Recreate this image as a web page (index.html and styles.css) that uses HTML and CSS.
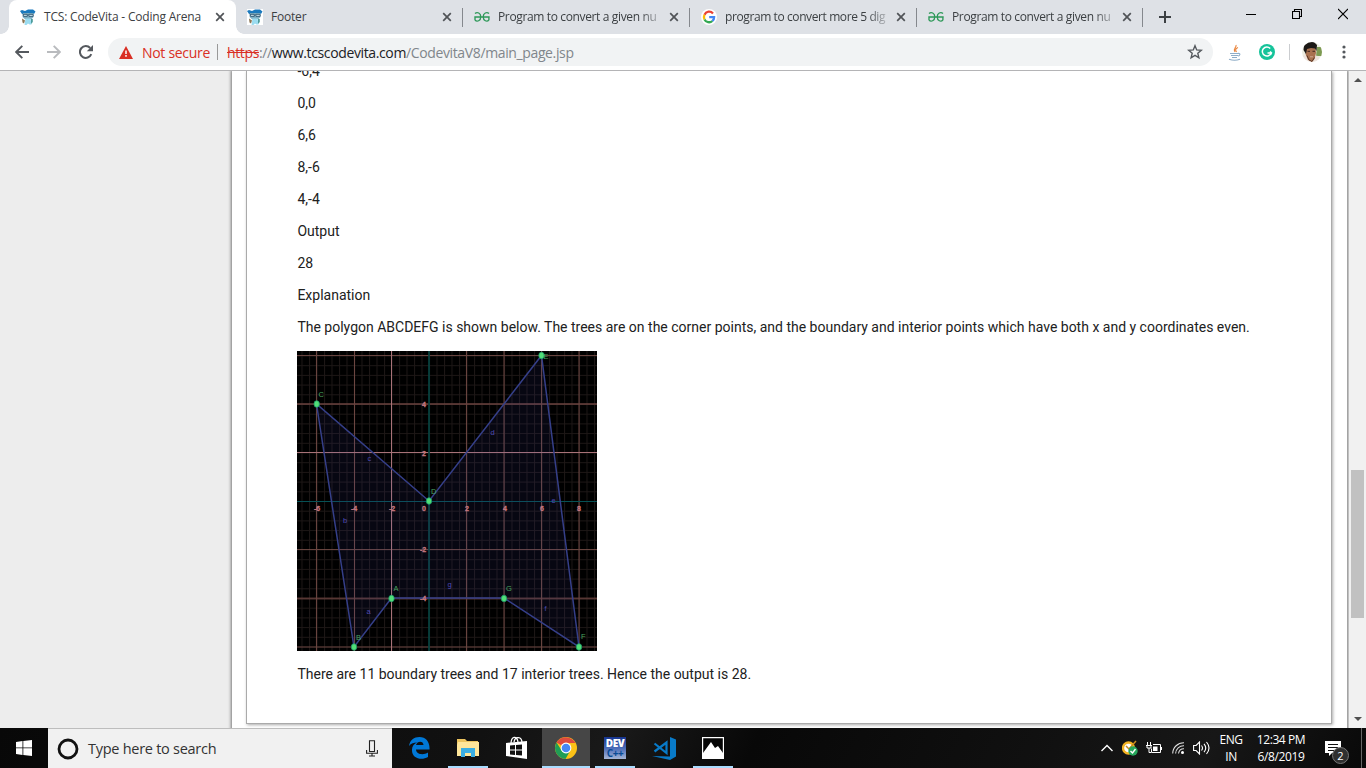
FILE: index.html
```html
<!DOCTYPE html>
<html lang="en">
<head>
<meta charset="utf-8">
<title>TCS: CodeVita - Coding Arena</title>
<link rel="stylesheet" href="styles.css">
</head>
<body>
<svg class="defs" width="0" height="0">
  <symbol id="close" viewBox="0 0 10 10"><path d="M1.2 1.2 8.8 8.8M8.8 1.2 1.2 8.8" stroke="#505357" stroke-width="1.7"/></symbol>
  <symbol id="mascot" viewBox="0 0 16 16">
    <path d="M0 2 2 1l3 1 3-1.400L13 .5 15.500 2.500 14 5 12 4 2 5Z" fill="#1a79bd"/>
    <path d="M3 4h10l.5 4-2 2.300H5L2.500 8Z" fill="#7fb0c4"/>
    <path d="M3 5.300h4.300v2H3.500ZM8.700 5.300h4.500v2H9Z" fill="#d9eff7" stroke="#27506a" stroke-width=".9"/>
    <path d="M5.500 9.500h5l1 6h-2L8 14.500l-1.500 1.500H4.500Z" fill="#9bdcf0"/>
    <path d="m2 9.500 3 2-1 3-1.500-1Z" fill="#8a7453"/><path d="M11 10h1.800v3l-1.800 2" fill="#4c9b9b"/>
  </symbol>
  <symbol id="geeks" viewBox="0 0 16 12">
    <path d="M1 2.5C3.2.6 6.8 2 6.8 5.8S3 11.5.9 8.8M.3 6h15.4M15 2.5C12.8.6 9.2 2 9.2 5.8S13 11.5 14.9 8.8V6M1 6v3" fill="none" stroke="#2d9858" stroke-width="1.35"/>
  </symbol>
</svg>

<header class="tabstrip">
  <div class="tab active"><svg class="fav"><use href="#mascot"/></svg><span class="title t1">TCS: CodeVita - Coding Arena</span><svg class="x"><use href="#close"/></svg></div>
  <div class="tab"><span class="fav square"><svg class="fav"><use href="#mascot"/></svg></span><span class="title t2">Footer</span><svg class="x"><use href="#close"/></svg></div>
  <div class="tab"><svg class="fav"><use href="#geeks"/></svg><span class="title fade t3">Program to convert a given nu</span><svg class="x"><use href="#close"/></svg></div>
  <div class="tab"><svg class="fav" viewBox="0 0 16 16"><circle cx="8" cy="8" r="8" fill="#fff"/><g fill="none" stroke-width="2.3"><path d="M12 4.4A5.1 5.1 0 0 0 3.5 5.7" stroke="#ea4335"/><path d="M3.5 5.7a5.1 5.1 0 0 0 0 4.7" stroke="#fbbc05"/><path d="M3.5 10.4A5.1 5.1 0 0 0 11.4 12" stroke="#34a853"/><path d="M11.4 12A5 5 0 0 0 13.1 8.2H8.2" stroke="#4285f4"/></g></svg><span class="title fade t4">program to convert more 5 dig</span><svg class="x"><use href="#close"/></svg></div>
  <div class="tab last"><svg class="fav"><use href="#geeks"/></svg><span class="title fade t3">Program to convert a given nu</span><svg class="x"><use href="#close"/></svg></div>
  <svg class="plus" viewBox="0 0 12 12"><path d="M6 0v12M0 6h12" stroke="#3c4043" stroke-width="2"/></svg>
  <div class="winctl">
    <svg width="10" height="12"><path d="M0 6.5h10" stroke="#000"/></svg>
    <svg width="10" height="12"><path d="M.5 3.5h7v7h-7zM2.500 3.500v-2h7v7h-2" fill="none" stroke="#000" stroke-width="1.1"/></svg>
    <svg width="10" height="12"><path d="m0 1 10 10M10 1 0 11" stroke="#000" stroke-width="1.1"/></svg>
  </div>
</header>

<nav class="toolbar">
  <svg class="nav" viewBox="0 0 14 14"><path d="M14 7H1.500M7.300.8 1.200 7l6.100 6.200" fill="none" stroke="#55595e" stroke-width="1.900"/></svg>
  <svg class="nav" viewBox="0 0 14 14"><path d="M0 7h12.500M6.700.8 12.800 7l-6.100 6.200" fill="none" stroke="#b9bbbe" stroke-width="1.900"/></svg>
  <svg class="nav" viewBox="0 0 14 14"><path d="M12.300 9.200A5.900 5.900 0 1 1 11.200 3" fill="none" stroke="#55595e" stroke-width="2"/><path d="M14 0v6.200H7.800Z" fill="#55595e"/></svg>
  <div class="omnibox">
    <svg width="14" height="13" viewBox="0 0 14 13"><path d="M7 0 14 13H0Z" fill="#d93025"/><path d="M7 4.500V8M7 9v1.700" stroke="#fff" stroke-width="1.500"/></svg>
    <span class="insecure">Not secure</span><i class="bar"></i>
    <span class="url"><s>https</s>://<b>www.tcscodevita.com</b>/CodevitaV8/main_page.jsp</span>
    <svg class="star" width="16" height="16" viewBox="0 0 16 16"><path d="m8 1.700 1.700 4.200 4.600.4-3.500 3 1.100 4.500L8 11.400l-3.900 2.400 1.100-4.500-3.500-3 4.600-.4Z" fill="none" stroke="#54585d" stroke-width="1.400"/></svg>
  </div>
  <svg class="java" width="14" height="17" viewBox="0 0 14 17"><path d="M8 1C9 3.500 4.500 4.500 7 8M10 3.500C7.500 4.500 7 5.500 8.500 8" fill="none" stroke="#e9833a" stroke-width="1.100"/><path d="M2 9.500h8M3 11.500h7M4 13.500h5M1 15.300c3 1 8 1 11 0M10 9.500c3-.7 2 2.500 0 2.500" fill="none" stroke="#8fadc7" stroke-width="1.100"/></svg>
  <svg class="gram" width="16" height="16" viewBox="0 0 16 16"><circle cx="8" cy="8" r="8" fill="#15c39a"/><path d="M11.200 4.500A4.500 4.500 0 1 0 12.100 9H8.500m2.500-1.500L12.500 9 11.500 11" fill="none" stroke="#fff" stroke-width="1.500"/></svg>
  <i class="bar pale"></i>
  <svg class="avatar" width="20" height="20" viewBox="0 0 20 20"><clipPath id="av"><circle cx="10" cy="10" r="10"/></clipPath><g clip-path="url(#av)"><path fill="#ecece0" d="M0 0h20v20H0z"/><path d="M15 5h5v9h-6z" fill="#7d9a52"/><path d="M0 14 6 12l10 2 2 6H0Z" fill="#eee3dc"/><path d="M4 5h9.500l.5 6-1.500 6L10 20l-4-2-2.500-6Z" fill="#a9714f"/><path d="M1.500 8 2 2.500 6 0h6l3 3-.5 6L13 6.500 9 6l-4 1-1 5Z" fill="#1c1917"/><path d="M5.500 9.300H8m2.500 0H13" stroke="#432920"/><path d="M5 13.500 7 18l3 1.500 2.500-4" fill="none" stroke="#5a3626"/><path d="M8 14.800h3" stroke="#d9b9a6" stroke-width=".8"/></g></svg>
  <svg class="dots" width="4" height="14"><g fill="#54585d"><circle cx="2" cy="2" r="1.600"/><circle cx="2" cy="7" r="1.600"/><circle cx="2" cy="12" r="1.600"/></g></svg>
</nav>

<main class="viewport">
  <div class="sheet">
    <article class="card">
      <p>-6,4</p><p>0,0</p><p>6,6</p><p>8,-6</p><p>4,-4</p><p>Output</p><p>28</p><p>Explanation</p>
      <p>The polygon ABCDEFG is shown below. The trees are on the corner points, and the boundary and interior points which have both x and y coordinates even.</p>
      <svg class="graph" width="300" height="300" viewBox="0 0 300 300">
        <defs><pattern id="minor" x="4.500" y="4.500" width="7.500" height="9.700" patternUnits="userSpaceOnUse"><path d="M.5 0v9.700M0 .5h7.500" stroke="#6d5553" stroke-opacity=".27"/></pattern></defs>
        <path fill="#000" d="M0 0h300v300H0z"/>
        <path fill="url(#minor)" d="M0 0h300v300H0z"/>
        <g fill="none" stroke="#855750" stroke-opacity=".75" stroke-width="1.100"><path d="M19.500 0v300M57.500 0v300M169.500 0v300M207 0v300M244.500 0v300M282 0v300M0 4.500h300M0 198.500h300M0 296h300"/><path d="M0 53h300M0 247.500h300" stroke="#6b433f" stroke-width="2"/></g>
        <path d="M94.500 0v300M0 101.500h300" stroke="#a87278"/>
        <path d="M132 0v300" stroke="#064440" stroke-width="1.700"/><path d="M0 150.500h300" stroke="#065054"/>
        <path d="M94.500 247 57 296 19.500 53 132 150 244.500 4.500 282 296 207 247Z" fill="#4640b0" fill-opacity=".1" stroke="#353f89" stroke-width="1.500"/>
        <g class="ticks"><text x="20" y="160">-6</text><text x="57" y="160">-4</text><text x="95" y="160">-2</text><text x="127" y="160">0</text><text x="170" y="160">2</text><text x="208" y="160">4</text><text x="245" y="160">6</text><text x="282" y="160">8</text><text x="127" y="56">4</text><text x="127" y="105">2</text><text x="126" y="201">-2</text><text x="126" y="250">-4</text></g>
        <g fill="#51df78" stroke="#1c9a69" stroke-width=".8"><ellipse cx="94.500" cy="247.500" rx="2.700" ry="3.300"/><ellipse cx="57" cy="296" rx="2.700" ry="3.300"/><ellipse cx="19.700" cy="53" rx="2.700" ry="3.300"/><ellipse cx="132" cy="150" rx="2.700" ry="3.300"/><ellipse cx="244.500" cy="4.500" rx="2.700" ry="3.300"/><ellipse cx="282" cy="296" rx="2.700" ry="3.300"/><ellipse cx="207" cy="247.500" rx="2.700" ry="3.300"/></g>
        <g class="points"><text x="96.500" y="240">A</text><text x="59" y="289">B</text><text x="21.500" y="46">C</text><text x="134" y="143">D</text><text x="246.500" y="8">E</text><text x="284" y="288">F</text><text x="209" y="240">G</text></g>
        <g class="edges"><text x="69.500" y="263">a</text><text x="46" y="172">b</text><text x="70.500" y="110">c</text><text x="193.500" y="84">d</text><text x="254.500" y="152">e</text><text x="247.500" y="260">f</text><text x="150.500" y="236">g</text></g>
      </svg>
      <p>There are 11 boundary trees and 17 interior trees. Hence the output is 28.</p>
    </article>
  </div>
  <div class="scroll"><i class="up"></i><i class="thumb"></i><i class="down"></i></div>
</main>

<footer class="taskbar">
  <div class="start"><svg width="16" height="16" viewBox="0 0 16 16"><path fill="#fff" d="M0 2 6.500 1v6.500H0ZM7.300.9 16 0v7.500H7.300ZM0 8.300h6.500V15L0 14ZM7.300 8.300H16V16l-8.700-1Z"/></svg></div>
  <div class="search"><svg width="22" height="22"><circle cx="11" cy="11" r="9" fill="none" stroke="#111" stroke-width="2.800"/></svg><span>Type here to search</span><svg class="mic" width="12" height="17"><path d="M3.500.7h5v10.800h-5zM.6 10v3.200h10.800V10M6 13.200v3M3 16h6" fill="none" stroke="#222" stroke-width="1.100"/></svg></div>
  <div class="apps">
    <div class="app"><svg width="21" height="22" viewBox="0 0 21 22"><path fill="#0078d7" d="M0 9C1 3 5 0 10.500 0 17 0 21 5 20.500 12.500H7c0 5 7.500 6 12 3v4.500C12 24 2.500 21 3 12.500 3 9 5 7 8 5.500 5 5.500 2 6 0 9Zm7-1h7.500C14.500 3.500 8 3.500 7 8Z"/></svg></div>
    <div class="app open"><svg width="22" height="20" viewBox="0 0 22 20"><path fill="#edc45f" d="M0 1h8l2 2h11v15H0z"/><path fill="#ffe69a" d="M1 4h21v14H0V7Z"/><path fill="#3baee2" d="M4 10h14v9h-4v-4H8v4H4z"/></svg></div>
    <div class="app"><svg width="22" height="24" viewBox="0 0 22 24"><path d="M5 8C5 0 11-1 12 6M8 6C9 0 16 0 16 7" fill="none" stroke="#fff" stroke-width="1.300"/><path fill="#fff" d="m0 7 21-2v18L0 20Z"/><path fill="#111" d="m4 9.500 5-.5v4.500H4Zm6-.6 6-.5v5h-6ZM4 14.500h5v4.500l-5-.5Zm6 0h6v5l-6-.5Z"/></svg></div>
    <div class="app open current"><svg width="22" height="22" viewBox="0 0 22 22"><circle cx="11" cy="11" r="11" fill="#fbc116"/><path d="M11 11 1.500 5.500A11 11 0 0 1 20.500 6H11Z" fill="#dd4b3e"/><path d="M1.500 5.500A11 11 0 0 0 10.500 22L15.300 13.500 7 14Z" fill="#209d56"/><circle cx="11" cy="11" r="5.400" fill="#fff"/><circle cx="11" cy="11" r="4.300" fill="#4688f4"/></svg></div>
    <div class="app open"><div class="dev"><b>DEV</b><span>C++</span></div></div>
    <div class="app"><svg width="24" height="23" viewBox="0 0 24 23"><path d="m18 0 6 2.500v17L18 23 0 19l18 .5Z" fill="#087ac8"/><path d="m2.500 6.500 12 9.500V5.500l-12 9" fill="none" stroke="#087ac8" stroke-width="2.200"/></svg></div>
    <div class="app open"><svg width="22" height="22"><path d="M.6.600h20.800v20.800H.6z" fill="#050505" stroke="#fff" stroke-width="1.200"/><path fill="#fff" d="m1 16 8-11 4 6 3-2 5 7v5H1Z"/></svg></div>
  </div>
  <div class="tray">
    <svg class="chev" width="12" height="8"><path d="m.5 7 5.500-5.500L11.500 7" fill="none" stroke="#fff" stroke-width="1.400"/></svg>
    <svg width="17" height="16" viewBox="0 0 17 16"><circle cx="6.500" cy="8" r="5.500" fill="#fff" stroke="#f4b322" stroke-width="2.300"/><path d="m4 6 3 3 7-8" fill="none" stroke="#c98a1c" stroke-width="1.500"/><circle cx="11" cy="11" r="4.700" fill="#26a65b"/><path d="m8.500 11 2 2 3-4" fill="none" stroke="#fff" stroke-width="1.400"/></svg>
    <svg class="batt" width="16" height="12"><path d="M1.500 0v3m3-3v3M0 3.500h6M1 4v2h4V4M3 6v4.500h2" fill="none" stroke="#fff"/><path d="M7 2.500h7.500v8h-9v-4M15.500 5v3" fill="none" stroke="#fff"/><path fill="#fff" d="M7 4.500h4.500v4.500H7z"/></svg>
    <svg width="13" height="12"><path d="M.7 11.500A11 11 0 0 1 12 .7M3.600 11.500A8 8 0 0 1 12 3.800M6.500 11.500A5.500 5.500 0 0 1 12 6.800" fill="none" stroke="#ddd" stroke-width="1.100"/><circle cx="10.500" cy="10.500" r="1.500" fill="#fff"/></svg>
    <svg width="17" height="14"><path d="M.6 4.500h2.500L6.500 1v12L3.100 9.500H.6ZM8.500 4.500q2 2.500 0 5M11 2.800q3.500 4.200 0 8.400M13.500 1q5 6 0 12" fill="none" stroke="#fff" stroke-width="1.100"/></svg>
    <div class="lang">ENG<br>IN</div>
    <div class="clock">12:34 PM<br>6/8/2019</div>
    <div class="notify"><svg width="16" height="15"><path fill="#fff" d="M0 0h16v12H7l-3 3v-3H0z"/><path d="M3 3.500h10M3 6.500h10M3 9.500h6" stroke="#111"/></svg><span class="badge">2</span></div>
    <i class="peek"></i>
  </div>
</footer>
</body>
</html>
```
FILE: styles.css
```css
* { box-sizing: border-box; }
body { margin: 0; width: 1366px; height: 768px; overflow: hidden; display: flex; flex-direction: column; background: #fff; font-family: "Open Sans", "Noto Sans", sans-serif; }
svg { flex: none; display: block; }
.defs { position: absolute; }
.tabstrip { height: 34px; flex: none; background: #dee1e6; display: flex; padding-left: 9px; }
.tab { width: 227px; height: 34px; display: flex; align-items: center; padding: 0 11px; position: relative; flex: none; }
.tab.last { width: 226px; }
.tab:nth-child(n+2)::after { content: ""; position: absolute; right: 0; top: 8px; height: 19px; width: 1px; background: #85888d; }
.tab.active { background: #fff; border-radius: 8px 8px 0 0; }
.tab.active::before, .tab.active::after { content: ""; position: absolute; bottom: 0; width: 8px; height: 8px; }
.tab.active::before { left: -8px; background: radial-gradient(circle at 0 0, transparent 7.5px, #fff 8px); }
.tab.active::after { right: -8px; background: radial-gradient(circle at 100% 0, transparent 7.5px, #fff 8px); }
.fav { width: 16px; height: 16px; flex: none; }
.square { background: #fff; }
.title { margin-left: 8px; width: 165px; flex: none; white-space: nowrap; font-size: 12px; line-height: 18px; color: #3c4043; }
.t1 { letter-spacing: -.2px; }
.t2 { letter-spacing: -.2px; }
.t3 { letter-spacing: -.36px; }
.t4 { letter-spacing: -.4px; }
.fade { -webkit-mask-image: linear-gradient(90deg, #000 142px, transparent 168px); mask-image: linear-gradient(90deg, #000 142px, transparent 168px); }
.x { width: 10px; height: 10px; margin-left: 6px; }
.last .x { margin-left: 5px; }
.plus { width: 12px; height: 12px; margin: 11px 0 0 16px; }
.winctl { display: flex; gap: 36px; margin: 8px 18px 0 auto; }
.toolbar { height: 37px; flex: none; display: flex; align-items: center; padding-left: 15px; border-bottom: 1px solid #b4b4b6; }
.nav { width: 14px; height: 14px; margin-right: 18px; }
.omnibox { height: 28px; width: 1105px; margin-left: -3px; flex: none; background: #f1f3f4; border-radius: 14px; display: flex; align-items: center; padding: 0 10px 0 11px; font-size: 14px; white-space: nowrap; }
.insecure { color: #d93025; margin-left: 9px; width: 68px; letter-spacing: -.4px; }
.insecure { letter-spacing: -.38px; }
.bar { width: 1px; height: 16px; background: #999; margin: 0 9px 0 7px; flex: none; }
.insecure { letter-spacing: -.3px; }
.url { color: #80868b; letter-spacing: -.37px; }
.url s { color: #d93025; }
.url b { font-weight: 400; color: #202124; }
.star { margin-left: auto; }
.java { margin-left: 15px; }
.gram { margin-left: 17px; }
.pale { background: #cbcdd0; margin: 0 12px 0 14px; }
.avatar { margin-right: 20px; }
.viewport { height: 657px; flex: none; display: flex; overflow: hidden; background: #ededed; padding-left: 232px; }
.sheet { width: 1115px; height: 680px; flex: none; background: #fff; box-shadow: 0 0 3px 1px #777; padding: 0 15px; }
.card { height: 653px; box-shadow: 1px 1px 3px #aaa; display: flex; flex-direction: column; background: #fff; border: 1px solid #aaa; border-top: 0; font: 14px/20px Roboto, sans-serif; color: #212121; padding-left: 50.4px; margin-left: -1px; }
.card p { margin: 0 0 12px; white-space: nowrap; }
.card p:first-child { margin-top: -10px; }
.graph { margin: 2px 0 13px -.4px; }
.graph text { font-family: "Liberation Sans", sans-serif; }
.ticks { font-size: 7px; font-weight: 700; fill: #c67880; stroke: #c67880; stroke-width: .3px; text-anchor: middle; }
.points { font-size: 7.500px; fill: #48a45f; }
.edges { font-size: 7.500px; fill: #4f4bb5; }
.scroll { width: 17px; margin-left: 2px; flex: none; background: #f1f1f1; display: flex; flex-direction: column; align-items: center; position: relative; }
.up, .down { width: 0; height: 0; border: 4px solid transparent; }
.up { border-bottom-color: #505050; border-top: 0; margin-top: 7px; }
.thumb { width: 13px; height: 148px; background: #c1c1c1; margin: 388px 2px auto; align-self: flex-start; }
.down { border-top-color: #505050; border-bottom: 0; margin-bottom: 7px; }
.taskbar { height: 40px; flex: none; display: flex; background: linear-gradient(115deg, #080808, #111 35%, #191919 45%, #080808 55%, #101010 75%, #171717 88%, #090909); color: #fff; }
.start { width: 48px; display: grid; place-items: center; }
.search { width: 344px; background: #f1f1f1; border-top: 1px solid #bdbdbd; color: #333; display: flex; align-items: center; padding: 0 14px 0 9px; font-size: 14.500px; }
.search span { margin-left: 9px; letter-spacing: -.27px; white-space: nowrap; }
.mic { margin-left: auto; }
.apps { display: flex; padding-left: 3px; gap: 1px; }
.app { width: 48px; display: grid; place-items: center; position: relative; }
.open::after { content: ""; position: absolute; left: 4px; right: 4px; bottom: 0; height: 2px; background: #a9dcff; }
.current { background: #464646; }
.current::after { left: 0; right: 0; }
.dev { width: 22px; height: 22px; background: linear-gradient(#17358f, #4a6bb8 50%, #a5b5d6); font: 700 10px/12px "Open Sans", sans-serif; text-align: center; }
.dev b, .dev span { display: block; letter-spacing: -.5px; height: 10px; }
.dev span { color: #064a94; }
.tray { margin-left: auto; display: flex; align-items: center; gap: 8px; }
.chev { margin-right: 1px; }
.batt { margin-right: 2px; margin-left: -1px; }
.lang, .clock { font-size: 12px; line-height: 17px; text-align: center; letter-spacing: -.4px; white-space: nowrap; }
.lang { width: 26px; }
.clock { width: 50px; margin-left: 4px; }
.notify { position: relative; margin-left: 11px; width: 24px; height: 15px; }
.badge { position: absolute; left: 7px; top: 6px; width: 17px; height: 17px; border-radius: 50%; border: 1px solid #777; background: #303030; font-size: 11px; line-height: 15px; text-align: center; }
.peek { width: 1px; height: 40px; background: #666; margin: 0 4px; }
```
